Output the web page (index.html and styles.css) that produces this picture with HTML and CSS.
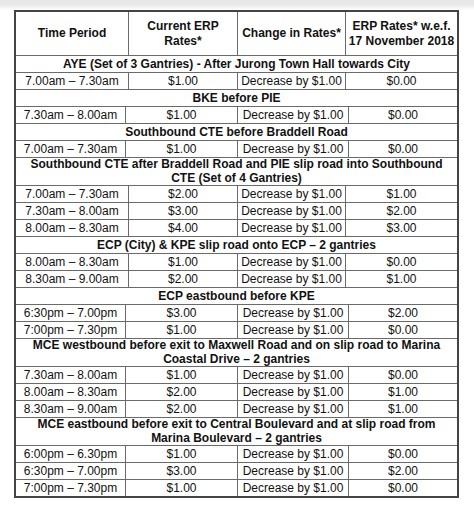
FILE: index.html
```html
<!DOCTYPE html>
<html>
<head>
<meta charset="utf-8">
<link rel="stylesheet" href="styles.css">
</head>
<body>
<div class="band"></div>
<div class="table">
  <div class="row a head">
    <div class="cell">Time Period</div>
    <div class="cell">Current ERP<br>Rates*</div>
    <div class="cell">Change in Rates*</div>
    <div class="cell">ERP Rates* w.e.f.<br>17 November 2018</div>
  </div>

  <div class="row sec">AYE (Set of 3 Gantries) - After Jurong Town Hall towards City</div>
  <div class="row a"><div class="cell">7.00am – 7.30am</div><div class="cell">$1.00</div><div class="cell">Decrease by $1.00</div><div class="cell">$0.00</div></div>

  <div class="row sec">BKE before PIE</div>
  <div class="row b"><div class="cell">7.30am – 8.00am</div><div class="cell">$1.00</div><div class="cell">Decrease by $1.00</div><div class="cell">$0.00</div></div>

  <div class="row sec">Southbound CTE before Braddell Road</div>
  <div class="row b"><div class="cell">7.00am – 7.30am</div><div class="cell">$1.00</div><div class="cell">Decrease by $1.00</div><div class="cell">$0.00</div></div>

  <div class="row sec two">Southbound CTE after Braddell Road and PIE slip road into Southbound<br>CTE (Set of 4 Gantries)</div>
  <div class="row a"><div class="cell">7.00am – 7.30am</div><div class="cell">$2.00</div><div class="cell">Decrease by $1.00</div><div class="cell">$1.00</div></div>
  <div class="row a"><div class="cell">7.30am – 8.00am</div><div class="cell">$3.00</div><div class="cell">Decrease by $1.00</div><div class="cell">$2.00</div></div>
  <div class="row a"><div class="cell">8.00am – 8.30am</div><div class="cell">$4.00</div><div class="cell">Decrease by $1.00</div><div class="cell">$3.00</div></div>

  <div class="row sec">ECP (City) &amp; KPE slip road onto ECP – 2 gantries</div>
  <div class="row a"><div class="cell">8.00am – 8.30am</div><div class="cell">$1.00</div><div class="cell">Decrease by $1.00</div><div class="cell">$0.00</div></div>
  <div class="row a"><div class="cell">8.30am – 9.00am</div><div class="cell">$2.00</div><div class="cell">Decrease by $1.00</div><div class="cell">$1.00</div></div>

  <div class="row sec">ECP eastbound before KPE</div>
  <div class="row b"><div class="cell">6:30pm – 7.00pm</div><div class="cell">$3.00</div><div class="cell">Decrease by $1.00</div><div class="cell">$2.00</div></div>
  <div class="row b"><div class="cell">7:00pm – 7.30pm</div><div class="cell">$1.00</div><div class="cell">Decrease by $1.00</div><div class="cell">$0.00</div></div>

  <div class="row sec two">MCE westbound before exit to Maxwell Road and on slip road to Marina<br>Coastal Drive – 2 gantries</div>
  <div class="row b"><div class="cell">7.30am – 8.00am</div><div class="cell">$1.00</div><div class="cell">Decrease by $1.00</div><div class="cell">$0.00</div></div>
  <div class="row b"><div class="cell">8.00am – 8.30am</div><div class="cell">$2.00</div><div class="cell">Decrease by $1.00</div><div class="cell">$1.00</div></div>
  <div class="row b"><div class="cell">8.30am – 9.00am</div><div class="cell">$2.00</div><div class="cell">Decrease by $1.00</div><div class="cell">$1.00</div></div>

  <div class="row sec two">MCE eastbound before exit to Central Boulevard and at slip road from<br>Marina Boulevard – 2 gantries</div>
  <div class="row b"><div class="cell">6:00pm – 6.30pm</div><div class="cell">$1.00</div><div class="cell">Decrease by $1.00</div><div class="cell">$0.00</div></div>
  <div class="row b"><div class="cell">6:30pm – 7.00pm</div><div class="cell">$3.00</div><div class="cell">Decrease by $1.00</div><div class="cell">$2.00</div></div>
  <div class="row b"><div class="cell">7:00pm – 7.30pm</div><div class="cell">$1.00</div><div class="cell">Decrease by $1.00</div><div class="cell">$0.00</div></div>
</div>
</body>
</html>
```

FILE: styles.css
```css
html, body {
  margin: 0;
  padding: 0;
  background: #ffffff;
}

body {
  font-family: "Liberation Sans", Arial, sans-serif;
  font-size: 12px;
  color: #111111;
  width: 474px;
  height: 510px;
  overflow: hidden;
}

.band {
  height: 10px;
  background: linear-gradient(#e7e7e7 0, #e9e9e9 5px, #ffffff 10px);
}

.table {
  margin-left: 14px;
  width: 445px;
  box-sizing: border-box;
  border: 2px solid #444444;
}

.row {
  height: 17px;
  box-sizing: border-box;
  border-top: 1px solid #6a6a6a;
  line-height: 16px;
  text-align: center;
  white-space: nowrap;
}

.row.a,
.row.b {
  display: grid;
}

.row.a {
  grid-template-columns: 112px 109px 108px 1fr;
}

.row.b {
  grid-template-columns: 109px 112px 111px 1fr;
}

.cell {
  border-left: 1px solid #6a6a6a;
  text-align: center;
}

.cell:first-child {
  border-left: none;
}

.row.head {
  height: 43px;
  border-top: none;
  font-weight: bold;
  line-height: 15px;
}

.row.head .cell {
  display: flex;
  align-items: center;
  justify-content: center;
}

.row.sec {
  font-weight: bold;
}

.row.sec.two {
  height: 28px;
  line-height: 13.5px;
}
```
